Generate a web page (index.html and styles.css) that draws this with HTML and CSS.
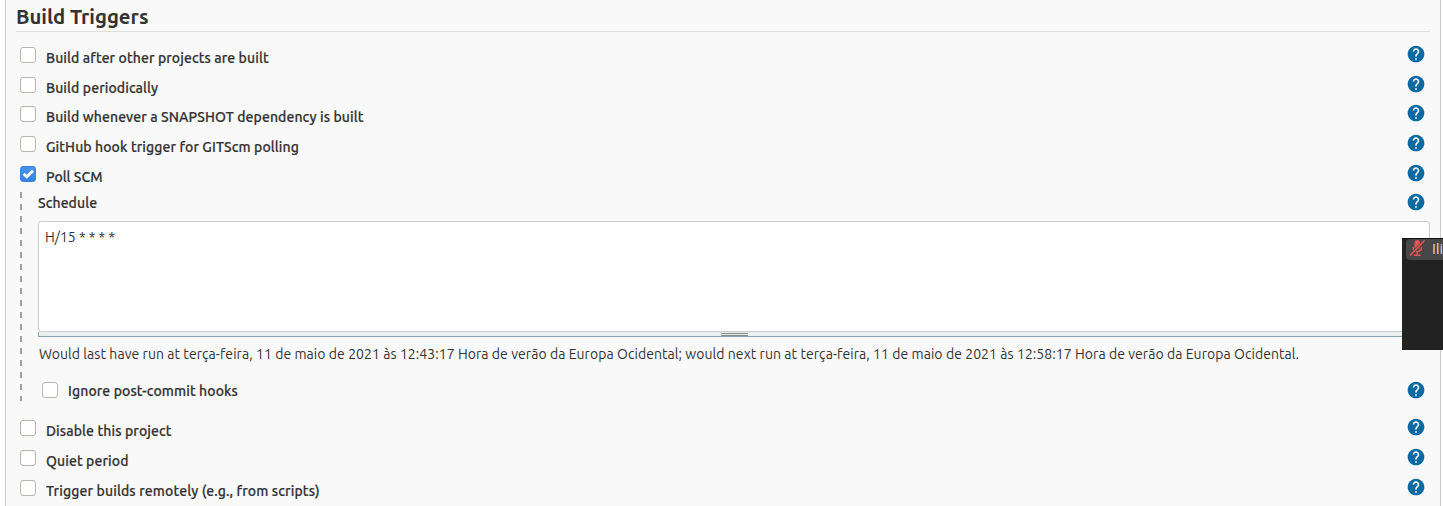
FILE: index.html
```html
<!DOCTYPE html>
<html lang="en">
<head>
<meta charset="utf-8">
<title>Build Triggers</title>
<link rel="stylesheet" href="styles.css">
</head>
<body>
<svg class="defs" width="0" height="0">
  <symbol id="help" viewBox="0 0 24 24"><path fill="#0b6aa2" d="M12 2C6.48 2 2 6.48 2 12s4.48 10 10 10 10-4.480 10-10S17.520 2 12 2z"/><path fill="#fff" d="M13 19h-2v-2h2v2zm2.070-7.750l-.9.920C13.450 12.900 13 13.500 13 15h-2v-.5c0-1.100.450-2.100 1.170-2.830l1.240-1.260c.370-.360.590-.860.590-1.410 0-1.100-.9-2-2-2s-2 .9-2 2H8c0-2.210 1.790-4 4-4s4 1.790 4 4c0 .880-.360 1.680-.930 2.250z"/></symbol>
</svg>
<main class="panel">
  <h1 class="title"><span>Build Triggers</span></h1>
  <section class="rows">
    <div class="row"><span class="box"></span><span class="label">Build after other projects are built</span><svg class="help"><use href="#help"/></svg></div>
    <div class="row"><span class="box"></span><span class="label">Build periodically</span><svg class="help"><use href="#help"/></svg></div>
    <div class="row"><span class="box"></span><span class="label">Build whenever a SNAPSHOT dependency is built</span><svg class="help"><use href="#help"/></svg></div>
    <div class="row"><span class="box"></span><span class="label">GitHub hook trigger for GITScm polling</span><svg class="help"><use href="#help"/></svg></div>
    <div class="row row-poll"><span class="box checked"><svg viewBox="0 0 16 16"><path d="M3.600 7.700 6.800 10.800 13 4.800"/></svg></span><span class="label short">Poll SCM</span><svg class="help"><use href="#help"/></svg></div>
  </section>
  <section class="nested">
    <div class="schedule"><span class="label">Schedule</span><svg class="help"><use href="#help"/></svg></div>
    <div class="textarea"><span class="cron">H/15 * * * *</span></div>
    <div class="handle"><i></i></div>
    <p class="note"><span>Would last have run at terça-feira, 11 de maio de 2021 às 12:43:17 Hora de verão da Europa Ocidental; would next run at terça-feira, 11 de maio de 2021 às 12:58:17 Hora de verão da Europa Ocidental.</span></p>
    <div class="row row-ignore"><span class="box"></span><span class="label">Ignore post-commit hooks</span><svg class="help"><use href="#help"/></svg></div>
  </section>
  <section class="rows rows-after">
    <div class="row"><span class="box"></span><span class="label">Disable this project</span><svg class="help"><use href="#help"/></svg></div>
    <div class="row"><span class="box"></span><span class="label">Quiet period</span><svg class="help"><use href="#help"/></svg></div>
    <div class="row"><span class="box"></span><span class="label wide">Trigger builds remotely (e.g., from scripts)</span><svg class="help"><use href="#help"/></svg></div>
  </section>
</main>
<aside class="call">
  <div class="caller">
    <svg width="18" height="18" viewBox="0 0 18 18"><rect x="5.500" y="1" width="5.500" height="9.500" rx="2.700" fill="#f25056"/><path d="M4 8c0 6 8.500 6 8.500 0M8.250 12.500V16M5 16.300h6.500" fill="none" stroke="#f25056" stroke-width="1.500"/><path d="M1.500 16 15.500 1.500" stroke="#474747" stroke-width="3"/><path d="M1 16.500 15.500 1.500" stroke="#f25056" stroke-width="1.600"/></svg>
    <span>Ili</span>
  </div>
</aside>
</body>
</html>
```
FILE: styles.css
```css
* { box-sizing: border-box; }
body {
  margin: 0;
  height: 506px;
  overflow: hidden;
  background: #fff;
  color: #333;
  font: 14px/20px Ubuntu, "Noto Sans", sans-serif;
}
.defs { position: absolute; }
.panel {
  height: 506px;
  margin: 0 2px 0 5px;
  padding: 0 10px;
  border: solid #ccc;
  border-width: 0 1px;
  background: #f9f9f9;
}
.title {
  height: 32px;
  margin: 0;
  padding-top: 4px;
  border-bottom: 1px solid #dedede;
  font-size: 20.300px;
  line-height: 26px;
  font-weight: 700;
}
.title span, .label, .cron, .note span { white-space: nowrap; }
.rows { padding: 15px 5px 0 4px; }
.row { display: flex; align-items: flex-start; height: 29.670px; }
.row-poll { height: 26.320px; }
.box {
  flex: none;
  width: 16px;
  height: 16px;
  border: 1px solid #bdb6b0;
  border-radius: 3px;
  background: #fff;
}
.checked { border-color: #3584e4; background: linear-gradient(#4a92ea, #3584e4); }
.checked svg { display: block; width: 16px; height: 16px; margin: -1px; fill: none; stroke: #fff; stroke-width: 2.800; }
.label { font-weight: 500; letter-spacing: .1px; -webkit-text-stroke: .2px #333; }
.label.short { letter-spacing: 0; }
.label.wide { letter-spacing: .135px; }
.row .label { margin: 1px 0 0 10px; }
.help { flex: none; width: 20px; height: 20px; margin: -3px -1px 0 auto; }
.nested {
  height: 209px;
  margin-left: 4px;
  padding-left: 18px;
  background: repeating-linear-gradient(#a0a0a0 0 6px, transparent 6px 12px) left top / 2px 100% no-repeat;
}
.schedule { display: flex; height: 29px; padding-right: 5px; }
.schedule .label { margin-top: 1px; }
.schedule .help { margin-top: 0; }
.textarea { height: 111px; padding: 5px 6px; border: 1px solid #ccc; border-radius: 3px; background: #fff; }
.handle { display: flex; justify-content: center; height: 5px; border: solid #8fa3b0; border-width: 0 0 1px 1px; background: #eaeff0; }
.handle i { width: 27px; height: 3px; margin-top: 1px; border: solid #888; border-width: 1px 0; }
.note { height: 45px; margin: 0; padding: 7px 0 0 1px; letter-spacing: .0605px; }
.row-ignore { padding: 0 5px 0 4px; }
.row-ignore .label { margin-top: -1px; }
.row-ignore .help { margin-top: -2px; }
.rows-after { padding-top: 19px; }
.rows-after .row { height: 30px; }
.call { position: absolute; left: 1402px; top: 238px; width: 41px; height: 112px; overflow: hidden; background: #222; border-top: 1px solid #111; }
.caller { display: flex; width: 60px; height: 21px; margin-left: 4px; padding-left: 3px; border-radius: 4px; background: #474747; color: #ddd; font: 14px/20px "Open Sans", sans-serif; }
.caller span { margin-left: 5px; }
```
